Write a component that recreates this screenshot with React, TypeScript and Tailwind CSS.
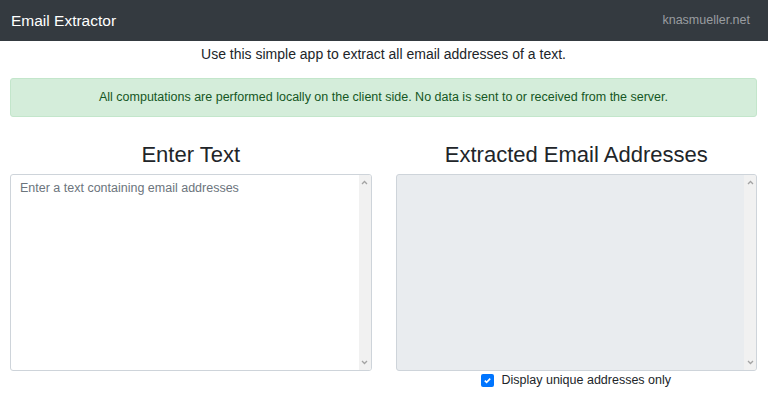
import React from 'react';

// Small chevron used in the fake textarea scrollbar
function Chevron({ up }: { up?: boolean }) {
  return (
    <svg width="7" height="5" viewBox="0 0 7 5" className="block">
      <polyline
        points={up ? '1,4 3.5,1.5 6,4' : '1,1 3.5,3.5 6,1'}
        fill="none"
        stroke="#a3a3a3"
        strokeWidth="1.3"
      />
    </svg>
  );
}

function TextBox({ placeholder, readOnly }: { placeholder?: string; readOnly?: boolean }) {
  return (
    <div
      className={
        'flex h-[197px] border border-[#ced4da] rounded-[3px] overflow-hidden ' +
        (readOnly ? 'bg-[#e9ecef]' : 'bg-white')
      }
    >
      <textarea
        readOnly={readOnly}
        placeholder={placeholder}
        className="flex-1 resize-none bg-transparent outline-none px-[9px] py-[4px] text-[12.5px] leading-[18px] text-[#495057] placeholder:text-[#6c757d]"
      />
      <div className="w-[12px] bg-[#f1f1f1] flex flex-col items-center justify-between py-[5px]">
        <Chevron up />
        <Chevron />
      </div>
    </div>
  );
}

export default function App() {
  return (
    <div className="w-[768px] h-[406px] overflow-hidden bg-white text-[#212529] font-['Liberation_Sans',Arial,sans-serif]">
      {/* Navbar */}
      <nav className="h-[41px] bg-[#343a40] flex items-center justify-between pl-[11px] pr-[18px]">
        <span className="text-white text-[15.5px]">Email Extractor</span>
        <span className="text-[12.5px] text-[#9a9da0]">knasmueller.net</span>
      </nav>

      <div className="pl-[10px] pr-[11px]">
        <p className="text-center text-[14px] leading-[16px] mt-[5px]">
          Use this simple app to extract all email addresses of a text.
        </p>

        {/* Alert */}
        <div className="mt-[16px] h-[39px] border border-[#c3e6cb] bg-[#d4edda] rounded-[3px] text-[#155724] text-[12.5px] flex items-center justify-center">
          All computations are performed locally on the client side. No data is sent to or received from the server.
        </div>

        {/* Columns */}
        <div className="grid grid-cols-2 gap-x-[24px] mt-[25px]">
          <div>
            <h3 className="text-center text-[22px] leading-[25px] mb-[7px]">Enter Text</h3>
            <TextBox placeholder="Enter a text containing email addresses" />
          </div>
          <div>
            <h3 className="text-center text-[22px] leading-[25px] mb-[7px]">Extracted Email Addresses</h3>
            <TextBox readOnly />
            <div className="h-[18px] flex items-center justify-center gap-[7px] text-[12.5px]">
              <span className="w-[13px] h-[13px] rounded-[2px] bg-[#0075ff] flex items-center justify-center">
                <svg width="9" height="9" viewBox="0 0 9 9">
                  <polyline points="1.8,4.6 3.6,6.4 7.2,2.6" fill="none" stroke="white" strokeWidth="1.6" />
                </svg>
              </span>
              <span>Display unique addresses only</span>
            </div>
          </div>
        </div>
      </div>
    </div>
  );
}
